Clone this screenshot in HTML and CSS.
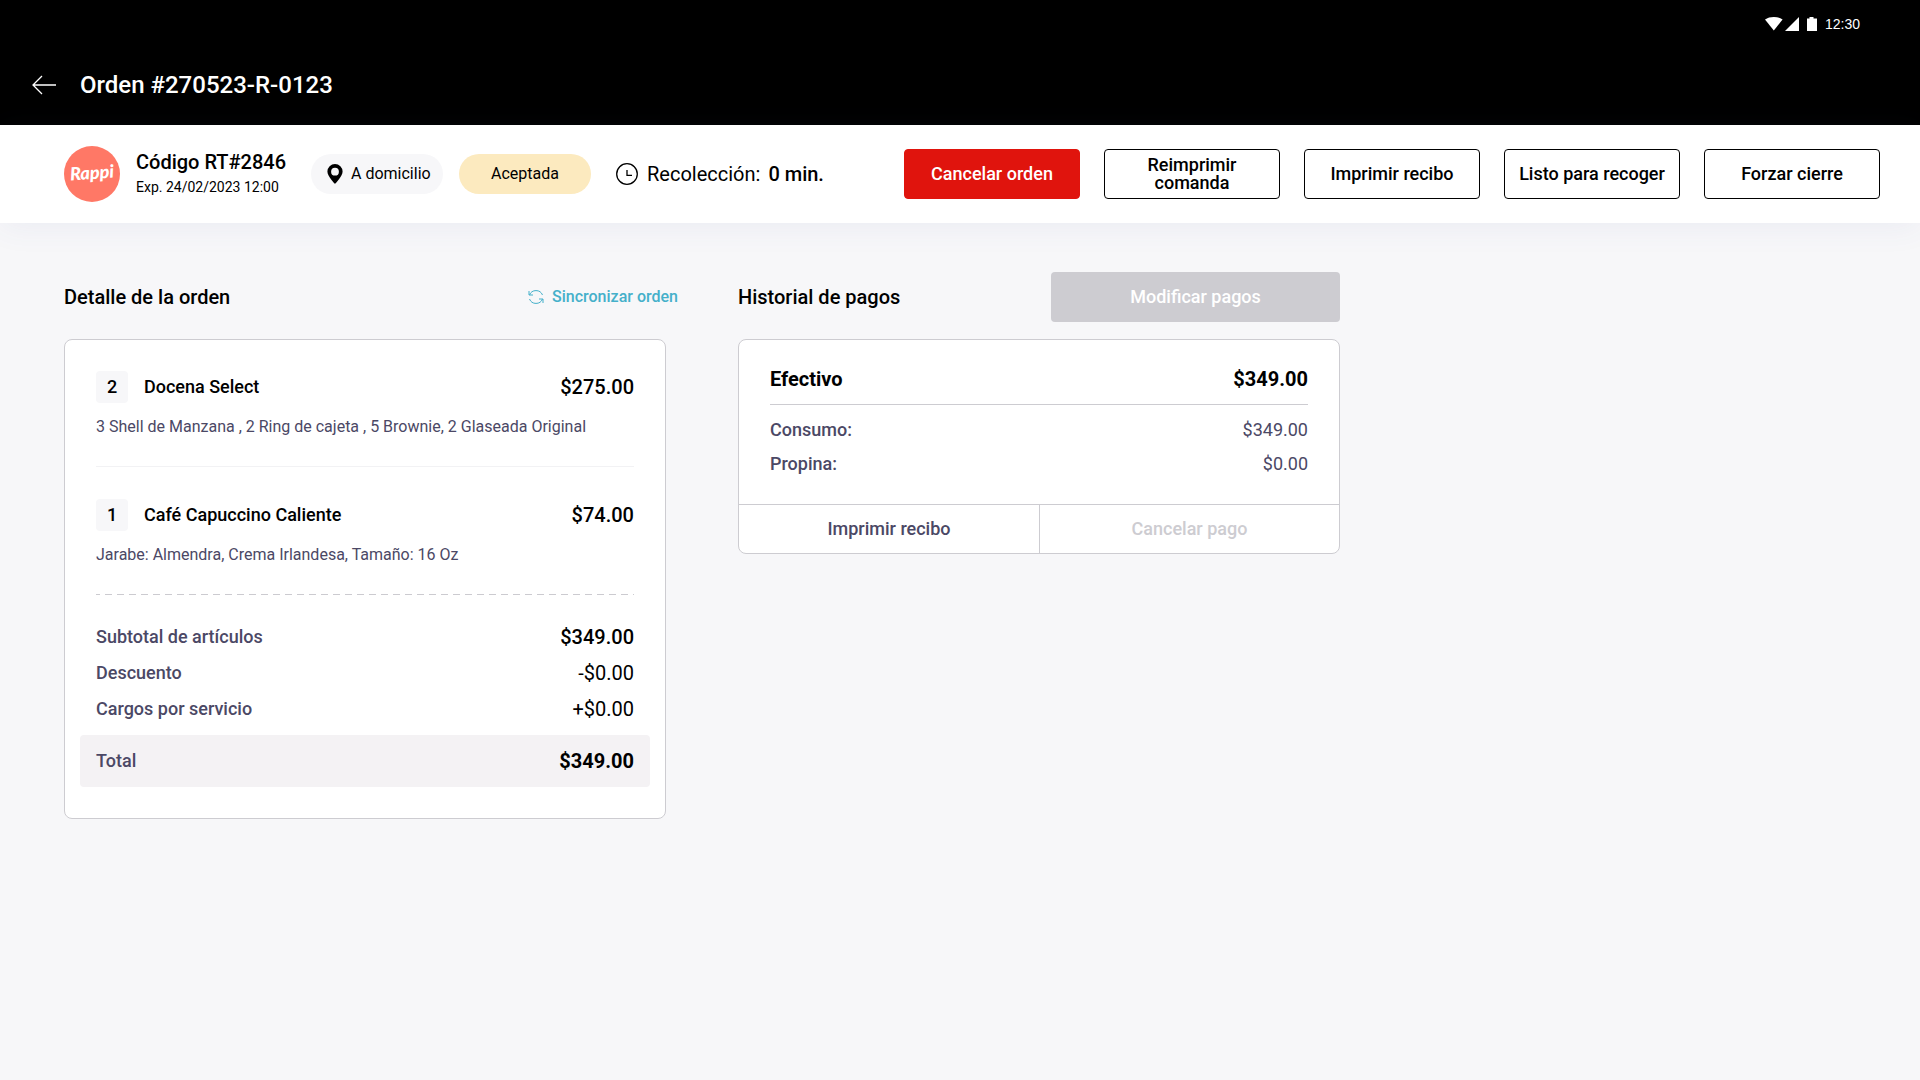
FILE: index.html
```html
<!DOCTYPE html>
<html lang="es">
<head>
<meta charset="utf-8">
<meta name="viewport" content="width=device-width, initial-scale=1">
<title>Orden #270523-R-0123</title>
<link rel="stylesheet" href="styles.css">
</head>
<body>
<header class="appbar">
  <div class="status">
    <svg class="status-icons" width="52" height="16" viewBox="0 0 52 16" fill="#fff" aria-hidden="true">
      <path d="M0 3.500C2.500 1.800 5.500 1 8.800 1s6.300.8 8.800 2.500L8.800 14.500z"/>
      <path d="M34 1v14H20z"/>
      <path d="M42 2.500h2.500V1h4v1.500H52V15H42z"/>
    </svg>
    <span>12:30</span>
  </div>
  <div class="titlebar">
    <a class="back" href="#" aria-label="Volver">
      <svg width="24" height="20" viewBox="0 0 24 20" fill="none" stroke="#fff" stroke-width="1.300" aria-hidden="true"><path d="M24 10H1M10 1 1 10l9 9"/></svg>
    </a>
    <h1>Orden #270523-R-0123</h1>
  </div>
</header>

<section class="orderbar">
  <svg class="logo" width="56" height="56" viewBox="0 0 56 56" role="img" aria-label="Rappi">
    <circle cx="28" cy="28" r="28" fill="#ff7866"/>
    <text x="28" y="33" text-anchor="middle" transform="rotate(-4 28 28)">Rappi</text>
  </svg>
  <div class="code">
    <h2>Código RT#2846</h2>
    <p>Exp. 24/02/2023 12:00</p>
  </div>
  <span class="pill pill-place">
    <svg width="16" height="20" viewBox="0 0 16 20" aria-hidden="true"><path fill-rule="evenodd" d="M8 0a7.600 7.600 0 0 0-7.600 7.600C.4 12.500 8 20 8 20s7.600-7.500 7.600-12.400A7.600 7.600 0 0 0 8 0zm0 3.800a3.900 3.900 0 1 1 0 7.800 3.900 3.900 0 0 1 0-7.800z"/></svg>
    A domicilio
  </span>
  <span class="pill pill-state">Aceptada</span>
  <p class="pickup">
    <svg width="24" height="24" viewBox="-1 -1 24 24" fill="none" stroke="#000" stroke-width="1.300" aria-hidden="true"><circle cx="11" cy="11" r="10.300"/><path d="M11 7v5.300h5"/></svg>
    Recolección: <strong>0 min.</strong>
  </p>
  <div class="actions">
    <button class="btn btn-danger" type="button">Cancelar orden</button>
    <button class="btn" type="button">Reimprimir comanda</button>
    <button class="btn" type="button">Imprimir recibo</button>
    <button class="btn" type="button">Listo para recoger</button>
    <button class="btn" type="button">Forzar cierre</button>
  </div>
</section>

<main class="content">
  <section>
    <div class="section-head">
      <h2>Detalle de la orden</h2>
      <button class="sync" type="button">
        <svg width="16" height="16" viewBox="0 0 16 16" fill="none" stroke="currentColor" stroke-width="1" aria-hidden="true"><path d="M1 2v4h4M1.500 6A7 7 0 0 1 14.500 6M15 14v-4h-4M14.500 10A7 7 0 0 1 1.500 10"/></svg>
        Sincronizar orden
      </button>
    </div>
    <div class="card order">
      <article class="item">
        <div class="item-row"><span class="qty">2</span><h3>Docena Select</h3><span class="price">$275.00</span></div>
        <p>3 Shell de Manzana , 2 Ring de cajeta , 5 Brownie, 2 Glaseada Original</p>
      </article>
      <article class="item">
        <div class="item-row"><span class="qty">1</span><h3>Café Capuccino Caliente</h3><span class="price">$74.00</span></div>
        <p>Jarabe: Almendra, Crema Irlandesa, Tamaño: 16 Oz</p>
      </article>
      <svg class="dashes" height="1" aria-hidden="true"><line x1="-3" y1="0.500" x2="100%" y2="0.500" stroke="#cccbd0" stroke-dasharray="7 5"/></svg>
      <dl class="sums">
        <div><dt>Subtotal de artículos</dt><dd class="medium">$349.00</dd></div>
        <div><dt>Descuento</dt><dd>-$0.00</dd></div>
        <div><dt>Cargos por servicio</dt><dd>+$0.00</dd></div>
        <div class="total"><dt>Total</dt><dd>$349.00</dd></div>
      </dl>
    </div>
  </section>

  <section>
    <div class="section-head">
      <h2>Historial de pagos</h2>
      <button class="btn-modify" type="button" disabled>Modificar pagos</button>
    </div>
    <div class="card payment">
      <div class="payment-body">
        <div class="payment-head"><h3>Efectivo</h3><span>$349.00</span></div>
        <dl class="payment-lines">
          <div><dt>Consumo:</dt><dd>$349.00</dd></div>
          <div><dt>Propina:</dt><dd>$0.00</dd></div>
        </dl>
      </div>
      <div class="payment-actions">
        <button type="button">Imprimir recibo</button>
        <button type="button" disabled>Cancelar pago</button>
      </div>
    </div>
  </section>
</main>
</body>
</html>
```
FILE: styles.css
```css
* { box-sizing: border-box; }

body {
  margin: 0;
  min-height: 100vh;
  background: #f7f7f9;
  color: #000;
  font-family: Roboto, "Liberation Sans", sans-serif;
  font-size: 18px;
  line-height: 24px;
}

h1, h2, h3, p, dl, dd { margin: 0; }
h1, h2, h3 { font-weight: 500; }
button { font: inherit; cursor: pointer; }
button:disabled { cursor: default; }
svg { flex: none; }

/* Top bar */
.appbar {
  height: 125px;
  background: #000;
  color: #fff;
}
.status {
  display: flex;
  justify-content: flex-end;
  align-items: center;
  gap: 8px;
  height: 48px;
  padding-right: 60px;
  font-family: "Liberation Sans", sans-serif;
  font-size: 14px;
}
.titlebar {
  display: flex;
  align-items: center;
  gap: 24px;
  height: 74px;
  padding: 0 32px;
}
.back { display: flex; }
.titlebar h1 { font-size: 24px; line-height: 32px; }

/* Order summary bar */
.orderbar {
  position: relative;
  display: flex;
  align-items: center;
  min-height: 98px;
  padding: 16px 40px 16px 64px;
  background: #fff;
  box-shadow: 0 4px 32px rgba(76, 86, 160, .07);
}
.logo text {
  fill: #fff;
  font-family: Lato, sans-serif;
  font-size: 18px;
  font-style: italic;
  font-weight: 900;
}
.code { width: 175px; margin-left: 16px; white-space: nowrap; }
.code h2 { font-size: 20px; line-height: 26px; }
.code p { font-size: 14px; line-height: 24px; }
.pill {
  display: flex;
  align-items: center;
  justify-content: center;
  gap: 8px;
  width: 132px;
  height: 40px;
  border-radius: 20px;
  font-size: 16px;
  white-space: nowrap;
}
.pill-place {
  justify-content: flex-start;
  padding-left: 16px;
  background: #f7f7f9;
}
.pill-state { margin-left: 16px; background: #fceabf; }
.pickup {
  display: flex;
  align-items: center;
  gap: 8px;
  margin-left: 24px;
  font-size: 20px;
  white-space: nowrap;
}
.pickup strong { font-weight: 500; }
.actions {
  display: flex;
  gap: 24px;
  margin-left: auto;
}
.btn {
  width: 176px;
  height: 50px;
  padding: 0 12px;
  border: 1px solid #000;
  border-radius: 4px;
  background: #fff;
  color: #000;
  font-weight: 500;
  line-height: 18px;
}
.btn-danger {
  border-color: #e0140d;
  background: #e0140d;
  color: #fff;
}

/* Columns */
.content {
  display: grid;
  grid-template-columns: repeat(2, minmax(0, 602px));
  align-items: start;
  gap: 72px;
  padding: 49px 64px;
}
.section-head {
  display: flex;
  align-items: center;
  justify-content: space-between;
  height: 50px;
  margin-bottom: 17px;
}
.section-head h2 { font-size: 20px; }
.sync {
  display: flex;
  align-items: center;
  gap: 8px;
  margin-right: -12px;
  padding: 0;
  border: 0;
  background: none;
  color: #45b0ca;
  font-size: 16px;
  font-weight: 500;
}
.btn-modify {
  width: 48%;
  height: 50px;
  border: 0;
  border-radius: 4px;
  background: #cdccd1;
  color: #fff;
  font-weight: 500;
}
.card {
  border: 1px solid #cdccd1;
  border-radius: 8px;
  background: #fff;
}

/* Order detail */
.order { padding: 31px 15px; }
.item { margin: 0 16px; }
.item + .item {
  margin-top: 27px;
  padding-top: 32px;
  border-top: 1px solid #f2f2f4;
}
.item-row {
  display: flex;
  align-items: center;
  gap: 16px;
}
.item h3 { font-size: 18px; }
.item p {
  margin-top: 12px;
  color: #4b4865;
  font-size: 16px;
}
.qty {
  width: 32px;
  border-radius: 4px;
  background: #f7f7f9;
  font-weight: 500;
  line-height: 32px;
  text-align: center;
}
.price {
  margin-left: auto;
  font-size: 20px;
  font-weight: 500;
}
.dashes {
  display: block;
  width: calc(100% - 32px);
  margin: 27px 16px 24px;
}
.sums div {
  display: flex;
  align-items: center;
  justify-content: space-between;
  height: 36px;
  padding: 0 16px;
}
.sums dt { color: #4b4865; font-weight: 500; }
.sums dd { font-size: 20px; }
.sums .medium { font-weight: 500; }
.sums .total {
  height: 52px;
  margin-top: 8px;
  border-radius: 4px;
  background: #f4f2f4;
}
.sums .total dd { font-weight: 700; }

/* Payment */
.payment-body { padding: 27px 31px 23px; }
.payment-head {
  display: flex;
  justify-content: space-between;
  padding-bottom: 13px;
  border-bottom: 1px solid #cdccd1;
  font-size: 20px;
  font-weight: 700;
}
.payment-head h3 { font-size: 20px; font-weight: 700; }
.payment-lines { padding-top: 8px; color: #4b4865; }
.payment-lines div {
  display: flex;
  align-items: center;
  justify-content: space-between;
  height: 34px;
}
.payment-lines dt { font-weight: 500; }
.payment-actions {
  display: grid;
  grid-template-columns: 1fr 1fr;
  border-top: 1px solid #cdccd1;
}
.payment-actions button {
  height: 48px;
  padding: 0;
  border: 0;
  background: none;
  color: #4b4865;
  font-weight: 500;
}
.payment-actions button:disabled {
  border-left: 1px solid #cdccd1;
  color: #cdccd1;
}
```
